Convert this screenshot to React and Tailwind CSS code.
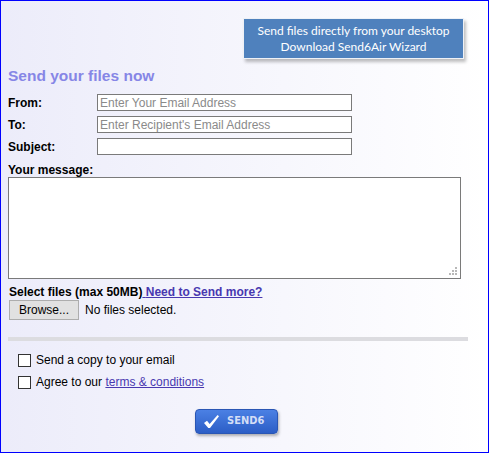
import { useState } from 'react';

const LABEL = 'w-[96px] shrink-0 pl-[7px] font-bold text-[12px] leading-[14px] text-black';
const INPUT =
  "w-[255px] h-[17px] border border-[#7a7a7a] bg-white px-[2px] text-[12px] leading-[15px] text-black placeholder:text-[#8a8a8a] outline-none font-['Liberation_Sans',Arial,sans-serif]";

const CheckIcon = () => (
  <svg width="17" height="15" viewBox="0 0 18 16" className="shrink-0">
    <path d="M1 9.5 L4.2 7.2 L7 10.6 L15.5 1 L17 2.4 L7.4 15 L5.6 15 Z" fill="#ffffff" />
  </svg>
);

const App = () => {
  const [from, setFrom] = useState('');
  const [to, setTo] = useState('');
  const [subject, setSubject] = useState('');
  const [message, setMessage] = useState('');
  const [copy, setCopy] = useState(false);
  const [agree, setAgree] = useState(false);

  return (
    <div className="w-[489px] h-[453px] border border-[#0000ff] bg-gradient-to-r from-[#ececfa] to-white font-['Liberation_Sans',Arial,sans-serif] text-[12px] text-black overflow-hidden">
      {/* Desktop app banner */}
      <div className="pt-[17px] pl-[242px]">
        <div className="w-[221px] h-[41px] bg-[#4f81bd] border border-[#eef1f6] shadow-[2px_3px_3px_rgba(0,0,0,0.25)] flex flex-col items-center justify-center font-['Lato',sans-serif] text-[12px] leading-[15.5px] text-white">
          <span>Send files directly from your desktop</span>
          <span>Download Send6Air Wizard</span>
        </div>
      </div>

      <h1 className="mt-[8px] pl-[7px] text-[15.5px] leading-[18px] font-bold text-[#8686e6]">
        Send your files now
      </h1>

      {/* Address fields */}
      <div className="mt-[9px] flex flex-col gap-[5px]">
        <div className="flex items-center">
          <label className={LABEL}>From:</label>
          <input className={INPUT} placeholder="Enter Your Email Address" value={from} onChange={(e) => setFrom(e.target.value)} />
        </div>
        <div className="flex items-center">
          <label className={LABEL}>To:</label>
          <input className={INPUT} placeholder="Enter Recipient's Email Address" value={to} onChange={(e) => setTo(e.target.value)} />
        </div>
        <div className="flex items-center">
          <label className={LABEL}>Subject:</label>
          <input className={INPUT} value={subject} onChange={(e) => setSubject(e.target.value)} />
        </div>
      </div>

      <p className="mt-[8px] pl-[7px] font-bold leading-[14px]">Your message:</p>
      <div className="ml-[7px] relative w-[453px] h-[102px]">
        <textarea
          className="block w-full h-full border border-[#7a7a7a] bg-white resize-none outline-none p-[2px] text-[12px]"
          value={message}
          onChange={(e) => setMessage(e.target.value)}
        />
        {/* resize grip */}
        <div className="absolute right-[4px] bottom-[4px] grid grid-cols-3 gap-[1px]">
          <span className="w-[2px] h-[2px]" />
          <span className="w-[2px] h-[2px]" />
          <span className="w-[2px] h-[2px] bg-[#b8b8b8]" />
          <span className="w-[2px] h-[2px]" />
          <span className="w-[2px] h-[2px] bg-[#b8b8b8]" />
          <span className="w-[2px] h-[2px] bg-[#b8b8b8]" />
          <span className="w-[2px] h-[2px] bg-[#b8b8b8]" />
          <span className="w-[2px] h-[2px] bg-[#b8b8b8]" />
          <span className="w-[2px] h-[2px] bg-[#b8b8b8]" />
        </div>
      </div>

      {/* File picker */}
      <p className="mt-[6px] pl-[8px] font-bold leading-[14px]">
        Select files (max 50MB)
        <a href="#" className="text-[#4838b0] underline">
          {' '}Need to Send more?
        </a>
      </p>
      <div className="mt-[1px] pl-[8px] flex items-center gap-[6px]">
        <button className="w-[70px] h-[20px] bg-[#e1e1e1] border border-[#adadad] text-[12px] leading-[14px]">
          Browse...
        </button>
        <span className="leading-[14px]">No files selected.</span>
      </div>

      <div className="mt-[17px] ml-[7px] w-[460px] h-[4px] bg-[#dcdce0]" />

      {/* Options */}
      <div className="mt-[12px] pl-[17px] flex flex-col gap-[8px]">
        <label className="flex items-center gap-[5px] leading-[14px]">
          <input
            type="checkbox"
            checked={copy}
            onChange={(e) => setCopy(e.target.checked)}
            className="appearance-none w-[13px] h-[13px] border border-[#333] bg-white m-0"
          />
          Send a copy to your email
        </label>
        <label className="flex items-center gap-[5px] leading-[14px]">
          <input
            type="checkbox"
            checked={agree}
            onChange={(e) => setAgree(e.target.checked)}
            className="appearance-none w-[13px] h-[13px] border border-[#333] bg-white m-0"
          />
          <span>
            Agree to our{' '}
            <a href="#" className="text-[#4838b0] underline">terms &amp; conditions</a>
          </span>
        </label>
      </div>

      {/* Submit */}
      <div className="mt-[20px] pl-[194px]">
        <button className="w-[83px] h-[25px] rounded-[4px] bg-gradient-to-b from-[#4b80e4] to-[#2c5ec6] border border-[#2a56b4] shadow-[1px_2px_3px_rgba(0,0,0,0.3)] flex items-center pl-[7px] gap-[7px]">
          <CheckIcon />
          <span className="font-['DejaVu_Sans_Condensed','Liberation_Sans',sans-serif] font-bold text-[11px] text-[#d4def6]">
            SEND6
          </span>
        </button>
      </div>
    </div>
  );
};

export default App;
